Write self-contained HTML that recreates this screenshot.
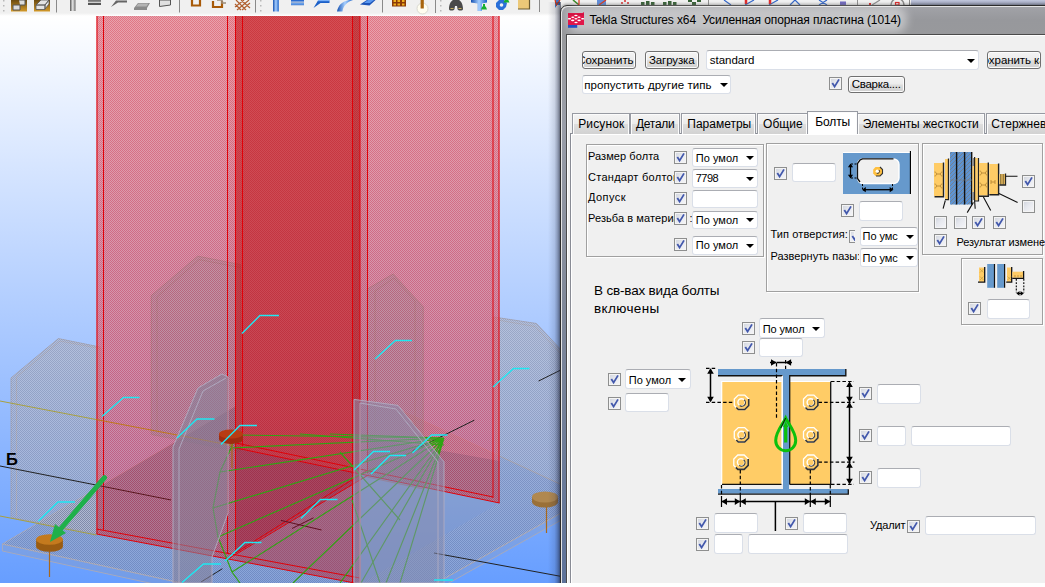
<!DOCTYPE html>
<html lang="ru"><head><meta charset="utf-8"><title>Tekla Structures</title>
<style>
html,body{margin:0;padding:0;background:#fff;}
#root{position:relative;width:1045px;height:587px;overflow:hidden;background:#fff;font-family:"Liberation Sans",sans-serif;font-size:12px;color:#000;}
#root svg.scene{position:absolute;left:0;top:0;}
#tb{position:absolute;left:0;top:0;width:1045px;height:16px;background:#f0f0f0;}
#tbr{position:absolute;left:911px;top:0;width:134px;height:6px;background:linear-gradient(#c0c6dc,#949ab2);}
#shadow{position:absolute;left:548px;top:2px;width:13px;height:581px;background:linear-gradient(90deg,rgba(40,50,80,0),rgba(40,50,80,.15) 50%,rgba(30,36,60,.6));}
#frame{position:absolute;left:560px;top:5px;width:500px;height:600px;box-sizing:border-box;border:1px solid #2c2c2c;border-radius:7px 0 0 0;background:linear-gradient(180deg,#a2a3a8 0,#97989c 14px,#98999c 28px,#9a9ea8 120px,#808898 300px,#5d7299 578px);box-shadow:inset 1px 1px 0 #e4e4e4,0 -1px 3px rgba(0,0,0,.38);}
#tglow{position:absolute;left:576px;top:15px;width:322px;height:9px;background:rgba(255,255,255,.42);box-shadow:0 0 9px 9px rgba(255,255,255,.42);border-radius:6px;}
#tdark{display:none;}
#title{position:absolute;left:589px;top:12px;white-space:nowrap;font-size:12px;line-height:15px;}
#client{position:absolute;left:566px;top:34px;width:490px;height:560px;box-sizing:border-box;border:1px solid #4a4a4a;background:#f0f0f0;box-shadow:inset 1px 1px 0 #fff;}
#bottom{position:absolute;left:0;top:583px;width:1045px;height:4px;background:#fff;}
.cb{position:absolute;width:13px;height:13px;box-sizing:border-box;border:1px solid #8e8f8f;background:linear-gradient(135deg,#cfd3dc 0,#e6e8ee 45%,#f6f6f8 100%);box-shadow:inset 0 0 0 1px #f4f4f4;}
.cb svg{position:absolute;left:0;top:0;}
.inp{position:absolute;box-sizing:border-box;background:#fff;border:1px solid #dadfe8;border-top-color:#abadb3;border-radius:3px;white-space:nowrap;overflow:hidden;}
.cmb .t{position:absolute;line-height:15px;white-space:nowrap;}
.cmb i{position:absolute;width:0;height:0;border-left:4px solid transparent;border-right:4px solid transparent;border-top:4.2px solid #000;}
.lb{position:absolute;white-space:nowrap;line-height:15px;font-size:12px;}
.btn{position:absolute;box-sizing:border-box;border:1px solid #707070;border-radius:3px;background:linear-gradient(#f4f4f4 0,#ececec 48%,#dedede 52%,#d0d0d0 100%);box-shadow:inset 0 0 0 1px #fcfcfc;overflow:hidden;white-space:nowrap;line-height:15px;}
.btn span{position:absolute;line-height:15px;white-space:nowrap;}
.grp{position:absolute;box-sizing:border-box;border:1px solid #a0a0a0;box-shadow:1px 1px 0 #fff,inset 1px 1px 0 #fff;}
.tab{position:absolute;box-sizing:border-box;border:1px solid #979aa2;border-bottom:none;background:linear-gradient(#f3f3f3 0,#ececec 50%,#dedede 50%,#d2d2d2 100%);box-shadow:inset 1px 1px 0 #fbfbfb,inset -1px 0 0 #fbfbfb;text-align:center;white-space:nowrap;overflow:hidden;line-height:17px;font-size:12.5px;}
.tab.sel{background:#fff;}
#pane{position:absolute;left:570px;top:133px;width:490px;height:470px;box-sizing:border-box;border:1px solid #898c95;background:#f0f0f0;box-shadow:inset 1px 1px 0 #fff;}

</style></head><body>
<div id="root">
<svg class="scene" width="560" height="583" viewBox="0 0 560 583">
<defs>
<linearGradient id="bg" x1="0" y1="15" x2="0" y2="583" gradientUnits="userSpaceOnUse"><stop offset="0" stop-color="#ffffff"/><stop offset="1" stop-color="#679eff"/></linearGradient>
<clipPath id="cnear"><polygon points="96.5,15 236,15 236,448 360,473 360,584 96.5,534"/></clipPath>
<pattern id="chk" width="2" height="2" patternUnits="userSpaceOnUse" shape-rendering="crispEdges"><rect width="1" height="1" fill="rgba(200,0,20,.17)"/><rect x="1" y="1" width="1" height="1" fill="rgba(200,0,20,.17)"/><rect x="1" width="1" height="1" fill="rgba(255,255,255,.17)"/><rect y="1" width="1" height="1" fill="rgba(255,255,255,.17)"/></pattern>
<pattern id="chkd" width="2" height="2" patternUnits="userSpaceOnUse" shape-rendering="crispEdges"><rect width="1" height="1" fill="rgba(170,0,10,.09)"/><rect x="1" y="1" width="1" height="1" fill="rgba(170,0,10,.09)"/><rect x="1" width="1" height="1" fill="rgba(255,255,255,.08)"/><rect y="1" width="1" height="1" fill="rgba(255,255,255,.08)"/></pattern>
<pattern id="chk2" width="2" height="2" patternUnits="userSpaceOnUse" shape-rendering="crispEdges"><rect width="1" height="1" fill="rgba(90,90,110,.16)"/><rect x="1" y="1" width="1" height="1" fill="rgba(90,90,110,.16)"/><rect x="1" width="1" height="1" fill="rgba(255,255,255,.14)"/><rect y="1" width="1" height="1" fill="rgba(255,255,255,.14)"/></pattern>
</defs>
<rect x="0" y="0" width="560" height="583" fill="url(#bg)"/>
<!-- base plate -->
<g fill="rgba(138,138,152,.42)" stroke="rgba(170,170,185,.9)" stroke-width="1">
<polygon points="2.4,544 236,406.3 236,448 360,473 360,400 400,410 589,497.4 365,623"/>
<polygon points="2.4,544 365,623 589,497.4 589,504.5 365,630 2.4,551" fill="rgba(150,150,160,.25)"/>
</g>
<!-- outer stiffeners behind column -->
<g fill="rgba(165,165,178,.52)" stroke="rgba(160,160,175,.9)" stroke-width="1">
<polygon points="11,378 58.4,338.6 100,347 100,534 11,517.5"/>
<polygon points="493.5,317 536.5,323.5 575,365 575,491 496,454.5"/>
</g>
<g fill="none" stroke="rgba(170,170,185,.9)" stroke-width="1">
<polyline points="16.5,517 16.5,377 60,341 102,349"/>
<polyline points="498,320 535,326.5 575,369"/>
</g>
<g fill="url(#chk2)"><polygon points="11,378 58.4,338.6 100,347 100,534 11,517.5"/><polygon points="493.5,317 536.5,323.5 575,365 575,491 496,454.5"/><polygon points="2.4,544 96.5,488 96.5,534 360,584 499.5,503 499.5,456 589,497.4 365,623"/></g>
<!-- far flange (part outside near flange) -->
<polygon points="360,15 499.5,15 499.5,503 360,473" fill="rgba(215,85,105,.66)"/>

<!-- near flange -->
<polygon points="96.5,15 360,15 360,584 96.5,534" fill="rgba(215,85,105,.66)"/>
<g fill="rgba(125,120,130,.30)" stroke="rgba(165,115,125,.85)" stroke-width="1">
<polygon points="151.3,295.6 197.7,256.2 240.6,264.6 240.6,452 151.3,434.4"/>
</g>
<polyline points="157,433 157,297 199,259.5 240,267.5" fill="none" stroke="rgba(165,115,125,.85)"/>
<polygon points="367.3,289 393.2,274 423.2,306.8 423.2,489 367.3,477" fill="rgba(125,120,130,.30)" stroke="rgba(165,115,125,.85)"/>
<polyline points="375,477 375,291 394,278 415,301 415,486" fill="none" stroke="rgba(165,115,125,.85)"/>
<polygon points="367.7,437.500 499.500,461 499.500,503 367.700,475.400" fill="rgba(90,60,100,.28)"/>
<!-- overlap darkening -->
<polygon points="236,15 360,15 360,473 236,448" fill="rgba(192,0,0,.55)"/>
<!-- web -->
<polygon points="228,15 236,15 236,553 228,559" fill="rgba(192,0,0,.04)"/>
<polygon points="360,15 367.7,15 367.7,475.4 360,480" fill="rgba(150,40,60,.12)"/>
<polygon points="352.5,15 360,15 360,473 352.5,471" fill="rgba(120,0,0,.14)"/>
<polygon points="236,448 360,473 360,480 236,553" fill="rgba(192,0,20,.50)"/>
<polygon points="2.4,544 280,380 400,410 589,497.4 365,623" fill="rgba(90,60,100,.30)" clip-path="url(#cnear)"/>
<polygon points="96.5,16 236,16 236,560.500 96.5,534" fill="url(#chk)"/><polygon points="360,16 499.5,16 499.5,503 360,473" fill="url(#chk)"/><polygon points="236,16 360,16 360,584 236,560.500" fill="url(#chkd)"/>
<!-- red edges -->
<g stroke="#e00008" stroke-width="1" fill="none">
<path d="M97 15V534M103.5 15V530M227.5 15V554M235.5 15V553M242.5 15V446M352.5 15V583M360 15V583M367.5 15V473M493 15V498M499 15V503"/>
<path d="M96.5 534L360 584M96.5 529L360 578M236 448L499.5 503M236 443L493 497M228 559L367.7 475.4M235.5 553L367.7 470"/>
</g>
<!-- grid lines -->
<g fill="none" stroke-width="1">
<path d="M0 401L96 419.5M0 516L96.5 535" stroke="#a8a040"/>
<path d="M96 419.5L232 445.5" stroke="#c07818"/>
<path d="M0 466L96 485" stroke="#222"/>
<path d="M96 485L171 500" stroke="#5a1820"/>
<path d="M281 520.4L321.5 530M292 528.5L313.5 517.8" stroke="#601020"/>
<path d="M434 553L560 576.2M201 582L222.4 568.7M412.6 450.8L474.3 420.2M538.6 381L560 370.4" stroke="#222"/>
</g>
<!-- green fan -->
<g fill="none" stroke="#2fa512" stroke-width="1.15">
<path d="M444 438L236 435M444 438L231 448M444 438L220 472M444 438L213 508M444 438L218 537M444 438L232 572M444 438L293 583M444 438L340 583M444 438L361 583M444 438L386 583M444 438L400 583M444 438L330 434"/>
<path d="M236 435L231 448L220 472L213 508L218 537L232 572L240 583"/>
<path d="M340 452L400 520M352 500L380 583M300 434L444 445"/>
</g>
<!-- front stiffeners -->
<g fill="rgba(135,130,155,.60)" stroke="rgba(176,172,194,.9)" stroke-width="1">
<polygon points="198,388 222,374 228,377 228,513 212,557 212,583 173,583 173,447"/>
<polygon points="354,399.4 398,405.4 444,461.8 444,583 354,583" fill="rgba(135,140,175,.55)"/>
</g>
<g fill="none" stroke="rgba(176,172,194,.9)">
<polyline points="179,583 179,449 203,391 226,378"/>
<polyline points="360,583 360,403 396,409 438,462 438,583"/>
</g>
<!-- anchors -->
<g>
<path d="M49.500 548V577M546.500 503V533M232 440V468" stroke="#a8681c" stroke-width="1.200"/>
<path d="M36.100 539.500v7a13.400 5.200 0 0 0 26.800 0v-7z" fill="#9a5c12"/><ellipse cx="49.500" cy="539.500" rx="13.400" ry="5.200" fill="#c47a1e"/>
<path d="M532 497v5a13 5.500 0 0 0 26 0v-5z" fill="#9a7038"/><ellipse cx="545" cy="497" rx="13" ry="5.500" fill="#b08850"/>
<path d="M219 434v5a12 5 0 0 0 24 0v-5z" fill="#a02c10"/><ellipse cx="231" cy="434" rx="12" ry="4.500" fill="#b83c14"/>
</g>
<!-- green arrow -->
<path d="M104.5 477.600L58 532" stroke="#1fb04a" stroke-width="5" stroke-linecap="round"/>
<polygon points="50,542 55,524 66,533" fill="#1fb04a"/>
<!-- cyan marks -->
<g fill="none" stroke="#1ee8f2" stroke-width="1.4" transform="translate(0,.5)">
<path d="M242 333L260 315H279M375 358.600L395.500 340H412M102 416L123.500 397H139.500M493 386.500L513.500 368H529.500M177 437.500L197 418.500H214.500M221 444L240 425H257M354 469.500L373.500 451H390M371 473.500L390 455H406M412.500 452.500L431.500 434.500H447.500M38.500 520.500L58 501.500H75M301 518L320.500 499H337.500M225 560.500L245 542H261.500M182 582L203.500 563.500H221M434 579.500H453"/>
</g>
<text x="6" y="464.800" font-family="Liberation Sans, sans-serif" font-weight="bold" font-size="16.500" fill="#000">Б</text>
</svg>

<div id="tb"></div><div id="tbr"></div>
<svg id="tbi" width="1045" height="16" viewBox="0 0 1045 16" style="position:absolute;left:0;top:0">
<defs>
<linearGradient id="gd" x1="0" y1="0" x2="0" y2="1"><stop offset="0" stop-color="#6a4a10"/><stop offset="1" stop-color="#d49a2a"/></linearGradient>
<linearGradient id="gy" x1="0" y1="0" x2="1" y2="0"><stop offset="0" stop-color="#555"/><stop offset=".5" stop-color="#e8e8e8"/><stop offset="1" stop-color="#666"/></linearGradient>
<linearGradient id="gb" x1="0" y1="0" x2="1" y2="0"><stop offset="0" stop-color="#1450b0"/><stop offset=".5" stop-color="#a8d0ff"/><stop offset="1" stop-color="#1860c8"/></linearGradient>
<linearGradient id="gbv" x1="0" y1="0" x2="0" y2="1"><stop offset="0" stop-color="#1450b0"/><stop offset=".5" stop-color="#8cc0ff"/><stop offset="1" stop-color="#1454b8"/></linearGradient>
<linearGradient id="fade" x1="0" y1="0" x2="0" y2="1"><stop offset="0" stop-color="#f0f0f0"/><stop offset="1" stop-color="#ffffff"/></linearGradient>
</defs>
<rect x="0" y="13" width="560" height="3" fill="url(#fade)"/>
<g fill="#b8b8b8"><rect x="3" y="0" width="1.500" height="1.500"/><rect x="3" y="5" width="1.500" height="1.500"/><rect x="3" y="10" width="1.500" height="1.500"/><rect x="260" y="0" width="1.500" height="1.500"/><rect x="260" y="5" width="1.500" height="1.500"/><rect x="260" y="10" width="1.500" height="1.500"/><rect x="440" y="0" width="1.500" height="1.500"/><rect x="440" y="5" width="1.500" height="1.500"/><rect x="440" y="10" width="1.500" height="1.500"/></g>
<g stroke="#8a8a8a" stroke-width="1"><path d="M56.500 0V12.500M179.500 0V12.500M255.500 0V12.500M382.500 0V12.500M435.500 0V13M539.500 0V12"/></g>
<rect x="11" y="0" width="16" height="11.500" fill="url(#gd)"/><path d="M13 5h7v5h-7zM19 0h6v5h-5" fill="#dcdcdc" stroke="#555" stroke-width="1"/>
<rect x="34" y="0" width="16" height="11.500" fill="url(#gd)"/><path d="M36 5l5-5h8l-4 5zM36 5h9v4.500h-9zM45 5l4-5v4l-4 5z" fill="#e4e4e4" stroke="#555" stroke-width=".8"/>
<rect x="70" y="0" width="5.500" height="11" fill="url(#gy)"/>
<rect x="88" y="0" width="13" height="1.800" fill="#777"/><rect x="88" y="2.800" width="13" height="2.200" fill="#555"/>
<path d="M111 7l5-6.500h11v2h-9z" fill="#666"/><path d="M116 0h11v1h-11z" fill="#aaa"/>
<path d="M134 8l4-5h12l-3 5zM134 8h13v2h-13z" fill="#8a8a8a"/><path d="M136 6.500l2.500-3h10l-2 3z" fill="#b4b4b4"/>
<path d="M159.500 0v6.500l11-1.500v-5z" fill="#e0e0e0" stroke="#555" stroke-width="1"/>
<path d="M192 0v5.500h8v-5.500" fill="none" stroke="#a85a08" stroke-width="2.200"/>
<path d="M213 1v6h9v-6" fill="none" stroke="#a85a08" stroke-width="2.200"/><path d="M217 0h5v3h4" fill="none" stroke="#9a8a78" stroke-width="1.600"/>
<path d="M236 0l10 10M241 0l9 8M235 4l6 6M249 0l-12 10M244 0l-9 7M250 3l-8 7" stroke="#b06030" stroke-width="1.200" fill="none"/>
<rect x="273" y="0" width="5.800" height="11.500" fill="url(#gb)"/>
<rect x="291" y="0" width="13" height="1.600" fill="#2a6cd0"/><rect x="291" y="2.600" width="13" height="2.600" fill="url(#gbv)"/>
<path d="M313.500 8l4.500-7.500h11.500v2.500h-9z" fill="#1c60c8"/><path d="M318 0h11.500v1.200h-11.500z" fill="#78b0f8"/>
<path d="M337 11.500c1-6 5-10 12-11.500h4c-6 2-10 6-10.500 11.500z" fill="url(#gb)"/>
<path d="M360 4.500l7-4.500h8.500l-6 5.500z" fill="#1c54b8"/><path d="M364 3l4-3h6l-4 3z" fill="#5a98f0"/>
<g fill="#8a3a08"><rect x="392" y="0" width="14" height="6.500"/></g><g fill="#f0b020"><rect x="393.500" y="0" width="2.500" height="2"/><rect x="397.500" y="0" width="2.500" height="2"/><rect x="402" y="0" width="2.500" height="2"/><rect x="393.500" y="3.500" width="2.500" height="2"/><rect x="397.500" y="3.500" width="2.500" height="2"/><rect x="402" y="3.500" width="2.500" height="2"/></g>
<circle cx="422.500" cy="8.500" r="5.500" fill="#fffdf0" stroke="#d8d8d0" stroke-width="1"/><rect x="420.600" y="0" width="3.200" height="8.500" fill="#a8640c"/>
<path d="M449 9c0-5 2-8 4-9h6c2 1 4 4 4 9c0 2-5 2-5.500 0l-.5-3h-2l-.5 3c-.5 2-5.500 2-5.500 0z" fill="#4a4a4a"/><path d="M450.500 8.500h3M458.500 8.500h3" stroke="#c8b060" stroke-width="1.200"/>
<path d="M471 0h16v2.500l-5 1v7.500h-4.500v-7.500l-6.500-1z" fill="url(#gb)"/><path d="M481 9.500h6l-1.200-3h-.8v-2.500h-2v2.500h-.8z" fill="#18b030"/>
<path d="M496 3l3-3h5l3 3-1 4-3 3h-4l-3-3z" fill="#2a70d8"/><circle cx="501.500" cy="5" r="1.800" fill="#f0f0f0"/><path d="M503.500 2.500h6l-1.200-2.500h-3.600z" fill="#18b030"/>
<rect x="518" y="0" width="11.500" height="9" fill="#ecc878"/><path d="M529.500 0v9h-11.500" fill="none" stroke="#6a5a30" stroke-width="1.200"/>
<path d="M555 0h5v5h-3l-2 3z" fill="#3a78d0"/><path d="M555 0l1.500 5l3.500-5" fill="none" stroke="#e83808" stroke-width="1.200"/>
<!-- strip above dialog -->
<g>
<path d="M573 0l6 5V0" fill="none" stroke="#d83010" stroke-width="1.200"/><path d="M573 0l5 4" stroke="#20a030" stroke-width="1.200"/>
<path d="M597 0h9v5h-9z" fill="#5a88d8"/><path d="M599 5l7-5" stroke="#e03010" stroke-width="1.200"/>
<path d="M621 3h2M627 3h2M624 1h2" stroke="#d82020" stroke-width="1.500"/>
<g fill="#2c5a2c"><rect x="641" y="2" width="3.500" height="3"/><rect x="646" y="1" width="3.500" height="4"/><rect x="651" y="2" width="3.500" height="3"/><rect x="663" y="2" width="3.500" height="3"/><rect x="668" y="1" width="3.500" height="4"/><rect x="673" y="2" width="3.500" height="3"/><rect x="688" y="0" width="4" height="2"/><rect x="692" y="2" width="4" height="3"/><rect x="697" y="0" width="4" height="2"/></g>
<path d="M708.500 0V5M857.500 0V5M909.500 0V5" stroke="#8a8a8a"/>
<path d="M724 0l7 5M745 5l9-5M769 5l9-5M790 5l5-5l5 5M819 0l8 5M827 0l-8 5" stroke="#2a60c8" stroke-width="1.200" fill="none"/>
<path d="M746 0v4M770 0v4" stroke="#e02020" stroke-width="2.500"/>
<rect x="840" y="1.500" width="6" height="3.500" fill="#6a60c0"/>
<path d="M869 3h2v2h-2z" fill="#e02020"/><path d="M872 5l8-5" stroke="#888" stroke-width="1.200"/>
<path d="M891 5a6.500 6.500 0 0 1 13 0" fill="none" stroke="#8a8a8a" stroke-width="1.500"/><rect x="895.500" y="2.500" width="3.500" height="2.500" fill="none" stroke="#e02020" stroke-width="1.200"/>
</g>
</svg>

<div id="win">
<div id="shadow"></div><div id="frame"></div><div id="tglow"></div><div id="tdark"></div>
<svg width="20" height="20" viewBox="566 10 20 20" style="position:absolute;left:566px;top:10px"><rect x="568" y="24" width="9.200" height="3.800" fill="#2452c4"/><path d="M568 13h14.500l1.500-1v13h-16z" fill="#e0184a"/><path d="M568 14.500h16" stroke="#c01038" stroke-width="1.500" opacity=".5"/><g fill="#fff"><ellipse cx="575.900" cy="15.600" rx="1.700" ry=".75"/><ellipse cx="572.800" cy="17.200" rx="1.600" ry=".75"/><ellipse cx="579" cy="17.200" rx="1.600" ry=".75"/><rect x="568" y="18.100" width="3" height="1.300" rx=".6"/><ellipse cx="575.900" cy="18.800" rx="1.600" ry=".75"/><rect x="581.200" y="18.100" width="2.800" height="1.300" rx=".6"/><ellipse cx="572.700" cy="20.400" rx="1.700" ry=".8"/><ellipse cx="579.100" cy="20.400" rx="1.700" ry=".8"/><ellipse cx="576" cy="22.500" rx="1.700" ry=".8"/></g></svg>

<span class="lb " style="left:589.5px;top:13.00px;font-size:12px;letter-spacing:-0.113px;">Tekla Structures x64&nbsp; Усиленная опорная пластина (1014)</span>
<div id="client"></div>
<span class="btn" style="left:582px;top:51px;width:54px;height:18px"><span style="left:-5.82px;top:1.00px;font-size:11.5px;letter-spacing:-0.093px">Сохранить</span></span>
<span class="btn" style="left:645px;top:51px;width:54px;height:18px"><span style="left:3px;top:1.00px;font-size:11.5px;letter-spacing:-0.127px;">Загрузка</span></span>
<span class="inp cmb" style="left:706px;top:50px;width:273px;height:19.5px"><span class="t" style="left:2.8px;top:2.00px;font-size:11.5px;letter-spacing:-0.033px;">standard</span><i style="left:260.3px;top:7.8px"></i></span>
<span class="btn" style="left:987px;top:51px;width:54px;height:18px"><span style="left:-13.57px;top:1.00px;font-size:11.5px;letter-spacing:-0.068px">Сохранить как</span></span>
<span class="inp cmb" style="left:582px;top:74.5px;width:149px;height:19px"><span class="t" style="left:1.2px;top:2.50px;font-size:11.5px;letter-spacing:0.086px;">пропустить другие типь</span><i style="left:137.0px;top:7.5px"></i></span>
<span class="cb" style="left:829px;top:77px;"><svg width="11" height="11" viewBox="0 0 11 11"><path d="M2.3 5L4.6 8.6L9 1.4" fill="none" stroke="#4258ac" stroke-width="1.8"/></svg></span>
<span class="btn" style="left:848px;top:75.5px;width:57px;height:17.5px"><span style="left:2.7px;top:0.50px;font-size:11.5px;letter-spacing:-0.255px;">Сварка....</span></span>
<div id="pane"></div>
<span class="tab" style="left:572px;top:113px;width:58px;height:21px"></span>
<span class="lb " style="left:578.2px;top:117.00px;font-size:12px;letter-spacing:0.133px;">Рисунок</span>
<span class="tab" style="left:630px;top:113px;width:50px;height:21px"></span>
<span class="lb " style="left:635.9px;top:117.00px;font-size:12px;letter-spacing:-0.243px;">Детали</span>
<span class="tab" style="left:681px;top:113px;width:75px;height:21px"></span>
<span class="lb " style="left:687.3px;top:117.00px;font-size:12px;letter-spacing:-0.008px;">Параметры</span>
<span class="tab" style="left:757px;top:113px;width:51px;height:21px"></span>
<span class="lb " style="left:763.1px;top:117.00px;font-size:12px;letter-spacing:0.006px;">Общие</span>
<span class="tab" style="left:857px;top:113px;width:127.5px;height:21px"></span>
<span class="lb " style="left:862.7px;top:117.00px;font-size:12px;letter-spacing:-0.076px;">Элементы жесткости</span>
<span class="tab" style="left:985.5px;top:113px;width:74.5px;height:21px"></span>
<span class="lb " style="left:991.2px;top:117.00px;font-size:12px;">Стержневые</span>
<span class="tab sel" style="left:807px;top:111px;width:51px;height:23px"></span>
<span class="lb " style="left:815.3px;top:115.00px;font-size:12px;letter-spacing:-0.144px;">Болты</span>
<span class="grp" style="left:586px;top:144px;width:178px;height:113px"></span>
<span class="lb " style="left:588px;top:149.00px;font-size:11px;letter-spacing:0.067px;">Размер болта</span>
<span class="lb " style="left:588px;top:170.00px;font-size:11px;width:86.3px;overflow:hidden;letter-spacing:0.272px;">Стандарт болтов</span>
<span class="lb " style="left:588px;top:190.00px;font-size:11px;letter-spacing:0.426px;">Допуск</span>
<span class="lb " style="left:689.6px;top:211.00px;font-size:11px;">:</span>
<span class="lb " style="left:588px;top:211.00px;font-size:11px;width:86px;overflow:hidden;letter-spacing:0.083px;">Резьба в материале:</span>
<span class="cb" style="left:674px;top:151px;"><svg width="11" height="11" viewBox="0 0 11 11"><path d="M2.3 5L4.6 8.6L9 1.4" fill="none" stroke="#4258ac" stroke-width="1.8"/></svg></span>
<span class="cb" style="left:674px;top:171px;"><svg width="11" height="11" viewBox="0 0 11 11"><path d="M2.3 5L4.6 8.6L9 1.4" fill="none" stroke="#4258ac" stroke-width="1.8"/></svg></span>
<span class="cb" style="left:674px;top:192px;"><svg width="11" height="11" viewBox="0 0 11 11"><path d="M2.3 5L4.6 8.6L9 1.4" fill="none" stroke="#4258ac" stroke-width="1.8"/></svg></span>
<span class="cb" style="left:674px;top:212px;"><svg width="11" height="11" viewBox="0 0 11 11"><path d="M2.3 5L4.6 8.6L9 1.4" fill="none" stroke="#4258ac" stroke-width="1.8"/></svg></span>
<span class="cb" style="left:674px;top:238px;"><svg width="11" height="11" viewBox="0 0 11 11"><path d="M2.3 5L4.6 8.6L9 1.4" fill="none" stroke="#4258ac" stroke-width="1.8"/></svg></span>
<span class="inp cmb" style="left:692px;top:147.5px;width:66px;height:19px"><span class="t" style="left:2.8px;top:2.50px;font-size:11px;letter-spacing:0.025px;">По умол</span><i style="left:52.7px;top:7.6px"></i></span>
<span class="inp cmb" style="left:692px;top:169px;width:66px;height:18.5px"><span class="t" style="left:2.8px;top:1.00px;font-size:11px;letter-spacing:-0.571px;">7798</span><i style="left:52.7px;top:6.7px"></i></span>
<span class="inp" style="left:692px;top:189.5px;width:66px;height:18px"></span>
<span class="inp cmb" style="left:692px;top:210.5px;width:66px;height:18.5px"><span class="t" style="left:2.8px;top:1.50px;font-size:11px;letter-spacing:0.025px;">По умол</span><i style="left:52.7px;top:6.5px"></i></span>
<span class="inp cmb" style="left:692px;top:235.5px;width:66px;height:19px"><span class="t" style="left:2.8px;top:1.50px;font-size:11px;letter-spacing:0.025px;">По умол</span><i style="left:52.7px;top:7.2px"></i></span>
<span class="grp" style="left:766px;top:143px;width:153px;height:149px"></span>
<span class="cb" style="left:774px;top:167px;"><svg width="11" height="11" viewBox="0 0 11 11"><path d="M2.3 5L4.6 8.6L9 1.4" fill="none" stroke="#4258ac" stroke-width="1.8"/></svg></span>
<span class="inp" style="left:792px;top:162.5px;width:44px;height:19.5px"></span>
<span class="cb" style="left:841px;top:204px;"><svg width="11" height="11" viewBox="0 0 11 11"><path d="M2.3 5L4.6 8.6L9 1.4" fill="none" stroke="#4258ac" stroke-width="1.8"/></svg></span>
<span class="inp" style="left:859px;top:201px;width:44px;height:19.5px"></span>
<span class="lb " style="left:770.4px;top:227.00px;font-size:11px;letter-spacing:0.117px;">Тип отверстия:</span>
<span class="cb" style="left:849px;top:230px;width:5.5px;border-right:none;overflow:hidden"><svg width="11" height="11" viewBox="0 0 11 11"><path d="M2.3 5L4.6 8.6L9 1.4" fill="none" stroke="#4258ac" stroke-width="1.8"/></svg></span>
<span class="inp cmb" style="left:859.5px;top:226.5px;width:58px;height:19.5px"><span class="t" style="left:2.1px;top:1.50px;font-size:11px;letter-spacing:-0.072px;">По умс</span><i style="left:45.5px;top:7.3px"></i></span>
<span class="lb " style="left:770.4px;top:249.00px;font-size:11px;letter-spacing:0.042px;width:89px;overflow:hidden">Развернуть пазы:</span>
<span class="inp cmb" style="left:859.5px;top:248px;width:58px;height:18.5px"><span class="t" style="left:2.1px;top:2.00px;font-size:11px;letter-spacing:-0.072px;">По умс</span><i style="left:45.5px;top:6.9px"></i></span>
<span class="grp" style="left:922px;top:143px;width:121px;height:112px"></span>
<span class="cb" style="left:1022px;top:175px;"><svg width="11" height="11" viewBox="0 0 11 11"><path d="M2.3 5L4.6 8.6L9 1.4" fill="none" stroke="#4258ac" stroke-width="1.8"/></svg></span>
<span class="cb" style="left:1022px;top:200px;"></span>
<span class="cb" style="left:934px;top:216px;"></span>
<span class="cb" style="left:954px;top:216px;"></span>
<span class="cb" style="left:972px;top:216px;"><svg width="11" height="11" viewBox="0 0 11 11"><path d="M2.3 5L4.6 8.6L9 1.4" fill="none" stroke="#4258ac" stroke-width="1.8"/></svg></span>
<span class="cb" style="left:993px;top:216px;"><svg width="11" height="11" viewBox="0 0 11 11"><path d="M2.3 5L4.6 8.6L9 1.4" fill="none" stroke="#4258ac" stroke-width="1.8"/></svg></span>
<span class="cb" style="left:934px;top:234px;"><svg width="11" height="11" viewBox="0 0 11 11"><path d="M2.3 5L4.6 8.6L9 1.4" fill="none" stroke="#4258ac" stroke-width="1.8"/></svg></span>
<span class="lb " style="left:956.5px;top:235.00px;font-size:11px;letter-spacing:-0.104px;">Результат изменен</span>
<span class="grp" style="left:961px;top:258px;width:82px;height:67px"></span>
<span class="cb" style="left:968px;top:302px;"><svg width="11" height="11" viewBox="0 0 11 11"><path d="M2.3 5L4.6 8.6L9 1.4" fill="none" stroke="#4258ac" stroke-width="1.8"/></svg></span>
<span class="inp" style="left:986.5px;top:298.5px;width:43.5px;height:20px"></span>
<span class="lb " style="left:594px;top:283.00px;font-size:13.5px;letter-spacing:-0.177px;">В св-вах вида болты</span>
<span class="lb " style="left:594px;top:301.00px;font-size:13.5px;letter-spacing:0.370px;">включены</span>
<span class="cb" style="left:742px;top:322px;"><svg width="11" height="11" viewBox="0 0 11 11"><path d="M2.3 5L4.6 8.6L9 1.4" fill="none" stroke="#4258ac" stroke-width="1.8"/></svg></span>
<span class="inp cmb" style="left:759px;top:318px;width:66px;height:19.5px"><span class="t" style="left:2.7px;top:3.00px;font-size:11px;letter-spacing:-0.075px;">По умол</span><i style="left:52.2px;top:8.0px"></i></span>
<span class="cb" style="left:742px;top:341px;"><svg width="11" height="11" viewBox="0 0 11 11"><path d="M2.3 5L4.6 8.6L9 1.4" fill="none" stroke="#4258ac" stroke-width="1.8"/></svg></span>
<span class="inp" style="left:759px;top:337.5px;width:44px;height:19px"></span>
<span class="cb" style="left:608px;top:373px;"><svg width="11" height="11" viewBox="0 0 11 11"><path d="M2.3 5L4.6 8.6L9 1.4" fill="none" stroke="#4258ac" stroke-width="1.8"/></svg></span>
<span class="inp cmb" style="left:625px;top:369px;width:65.5px;height:19.5px"><span class="t" style="left:2.8px;top:3.00px;font-size:11px;letter-spacing:-0.004px;">По умол</span><i style="left:52.2px;top:8.4px"></i></span>
<span class="cb" style="left:608px;top:397px;"><svg width="11" height="11" viewBox="0 0 11 11"><path d="M2.3 5L4.6 8.6L9 1.4" fill="none" stroke="#4258ac" stroke-width="1.8"/></svg></span>
<span class="inp" style="left:625px;top:393px;width:44px;height:19px"></span>
<span class="cb" style="left:859px;top:387px;"><svg width="11" height="11" viewBox="0 0 11 11"><path d="M2.3 5L4.6 8.6L9 1.4" fill="none" stroke="#4258ac" stroke-width="1.8"/></svg></span>
<span class="inp" style="left:877px;top:384px;width:44px;height:19.5px"></span>
<span class="cb" style="left:859px;top:429px;"><svg width="11" height="11" viewBox="0 0 11 11"><path d="M2.3 5L4.6 8.6L9 1.4" fill="none" stroke="#4258ac" stroke-width="1.8"/></svg></span>
<span class="inp" style="left:877px;top:426px;width:29px;height:19.5px"></span>
<span class="inp" style="left:911px;top:426px;width:100px;height:19.5px"></span>
<span class="cb" style="left:859px;top:471px;"><svg width="11" height="11" viewBox="0 0 11 11"><path d="M2.3 5L4.6 8.6L9 1.4" fill="none" stroke="#4258ac" stroke-width="1.8"/></svg></span>
<span class="inp" style="left:877px;top:468px;width:44px;height:19.5px"></span>
<span class="cb" style="left:696px;top:517px;"><svg width="11" height="11" viewBox="0 0 11 11"><path d="M2.3 5L4.6 8.6L9 1.4" fill="none" stroke="#4258ac" stroke-width="1.8"/></svg></span>
<span class="inp" style="left:714px;top:512.5px;width:44px;height:20px"></span>
<span class="cb" style="left:785px;top:517px;"><svg width="11" height="11" viewBox="0 0 11 11"><path d="M2.3 5L4.6 8.6L9 1.4" fill="none" stroke="#4258ac" stroke-width="1.8"/></svg></span>
<span class="inp" style="left:803px;top:512.5px;width:44px;height:20px"></span>
<span class="cb" style="left:696px;top:538px;"><svg width="11" height="11" viewBox="0 0 11 11"><path d="M2.3 5L4.6 8.6L9 1.4" fill="none" stroke="#4258ac" stroke-width="1.8"/></svg></span>
<span class="inp" style="left:714px;top:534px;width:28.5px;height:19.5px"></span>
<span class="inp" style="left:748px;top:534px;width:100px;height:19.5px"></span>
<span class="lb " style="left:870px;top:518.00px;font-size:11px;letter-spacing:-0.128px;">Удалит</span>
<span class="cb" style="left:907px;top:520px;"><svg width="11" height="11" viewBox="0 0 11 11"><path d="M2.3 5L4.6 8.6L9 1.4" fill="none" stroke="#4258ac" stroke-width="1.8"/></svg></span>
<span class="inp" style="left:925px;top:515.5px;width:111px;height:19.5px"></span>
<svg id="pics" width="1045" height="587" viewBox="0 0 1045 587" style="position:absolute;left:0;top:0;pointer-events:none">
<defs>
<pattern id="hatch" width="4" height="4" patternUnits="userSpaceOnUse"><path d="M-1 5l6-6M-1 1l2-2M3 5l2-2" stroke="#7a7a7a" stroke-width=".7"/></pattern>
</defs>
<!-- slotted hole picture -->
<rect x="843" y="152" width="67.500" height="42" fill="#6699cc"/>
<path d="M843 152.500h67" stroke="#fff" stroke-width="1"/>
<path d="M910.500 151v43" stroke="#000" stroke-width="1.300"/><path d="M911.700 151v43" stroke="#fff" stroke-width="1"/>
<rect x="857.500" y="159" width="41.500" height="24.500" rx="5.500" fill="#f0f0f0" stroke="#fff" stroke-width="1.400"/>
<path d="M860 182l-2.500-3.500v-15l2.500-3.500l2.500-1.200h31" fill="none" stroke="#111" stroke-width="1.300"/>
<path d="M875.500 167h4.500l2.500 2.500v4l-2.500 2.500h-4.500l-2.300-2.500v-4z" fill="#ffc040"/><path d="M880 167l2.500 2.500v4l-2.500 2.500h-4" fill="none" stroke="#333" stroke-width="1.100"/><circle cx="877.300" cy="171.300" r="1.700" fill="#fff"/><path d="M879 170a2 2 0 0 1-2.300 3.200" stroke="#333" stroke-width=".9" fill="none"/>
<path d="M850.500 165v12" stroke="#000" stroke-width="1.300"/><path d="M850.500 163.500l2.600 3.800h-5.200zM850.500 178.500l2.600-3.800h-5.200z" fill="#000"/>
<path d="M851 164h6M851 178h6M862.500 184v5M892.500 184v5" stroke="#000" stroke-width="1" stroke-dasharray="2 1.500"/>
<path d="M863 189.700h29" stroke="#000" stroke-width="1.300"/><path d="M862 189.700l3.800-2.600v5.200zM893.500 189.700l-3.800-2.600v5.200z" fill="#000"/>
<!-- bolt assembly picture -->
<g>
<rect x="934" y="163" width="9.500" height="33" fill="#ffcc66"/><path d="M943.500 162.500v34.200h-9" fill="none" stroke="#222" stroke-width="1.400"/>
<path d="M934.500 172c1.500 0 2 1 2 2s-.5 2-2 2M942.500 172c-1.500 0-2 1-2 2s.5 2 2 2M936.500 174h4M934.500 184c1.500 0 2 1 2 2s-.5 2-2 2M942.500 184c-1.500 0-2 1-2 2s.5 2 2 2M936.500 186h4" fill="none" stroke="#b08030" stroke-width=".8"/>
<rect x="945" y="159" width="3" height="40" fill="#ffcc66"/><path d="M948.500 158.500v41.200h-3.500" fill="none" stroke="#222" stroke-width="1.300"/>
<rect x="950" y="152" width="22" height="52.500" fill="#5e93d1"/><rect x="950" y="152" width="22" height="52.500" fill="url(#hatch)"/>
<path d="M956.600 152v52.500M964.600 152v52.500M971.700 152v52.500" stroke="#111" stroke-width="1.400"/>
<path d="M950 180h22" stroke="#7a7a7a" stroke-width=".6"/>
<rect x="972.500" y="158" width="2" height="42" fill="#8a8a8a"/><rect x="972.500" y="166" width="2" height="26" fill="#ffcc66"/>
<rect x="974.800" y="158" width="3" height="42.500" fill="#ffcc66"/><path d="M974.600 157v44M978.500 158v43h-4" fill="none" stroke="#222" stroke-width="1.200"/>
<rect x="979" y="163" width="9" height="32.500" fill="#ffcc66"/><path d="M988.300 162.500v33.700h-9.300" fill="none" stroke="#222" stroke-width="1.400"/>
<path d="M979.500 171c1.500 0 2 1 2 2s-.5 2-2 2M987.500 171c-1.500 0-2 1-2 2s.5 2 2 2M981.500 173h4M979.500 183c1.500 0 2 1 2 2s-.5 2-2 2M987.500 183c-1.500 0-2 1-2 2s.5 2 2 2M981.500 185h4" fill="none" stroke="#b08030" stroke-width=".8"/>
<rect x="989.300" y="164" width="9" height="30" fill="#ffcc66"/><path d="M998.600 163.500v31.300h-9.300" fill="none" stroke="#222" stroke-width="1.400"/><path d="M991 180v4M995 180v4M991 182h4" stroke="#b08030" stroke-width=".8" fill="none"/>
<rect x="999.300" y="174" width="6" height="10.500" fill="#ffcc66"/><path d="M1000.500 174v10.500M1002 174v10.500M1003.500 174v10.500" stroke="#6a5a30" stroke-width=".7"/><path d="M1005.500 173.500v11.500h-6.200" fill="none" stroke="#222" stroke-width="1.300"/>
<path d="M1005.500 176.300h12M999 193.600l18.600 8.800M983.400 197l7.300 13.400M974.600 201l.6 7.700M973.400 202.400l-6.200 10.200M945.300 200.500l-2.200 8.200" stroke="#111" stroke-width="1.100" fill="none"/>
</g>
<!-- small picture -->
<g>
<rect x="979" y="267.500" width="5.400" height="14.300" fill="#ffcc66"/><path d="M984.700 267v15.200h-6.700" fill="none" stroke="#111" stroke-width="1.300"/><path d="M980 269l3.500 3.500M983.500 269l-3.500 3.500M980 276.500l3.500 3.500M983.500 276.500l-3.500 3.500" stroke="#c8a040" stroke-width=".7"/>
<rect x="987.200" y="264" width="6.800" height="23.800" fill="#6699cc"/><path d="M994.500 264v23.800" stroke="#111" stroke-width="1.200"/>
<rect x="997.200" y="264" width="6.900" height="23.800" fill="#6699cc"/><path d="M1004.600 264v23.800" stroke="#111" stroke-width="1.200"/>
<rect x="1007" y="267.500" width="4.300" height="14.300" fill="#ffcc66"/><path d="M1011.700 267v15.200h-5.500" fill="none" stroke="#111" stroke-width="1.300"/><path d="M1007.500 276.500l3.500 3.500M1011 276.500l-3.500 3.500" stroke="#c8a040" stroke-width=".7"/>
<rect x="1012.300" y="271.700" width="11" height="6" fill="#ffcc66"/><path d="M1023.600 271v7.300h-11.300" fill="none" stroke="#111" stroke-width="1.300"/><path d="M1015 275v2.500M1018 275v2.500M1021 275v2.500" stroke="#a88030" stroke-width=".7"/>
<path d="M1016.300 279v13.500M1023.800 279v13.500" stroke="#000" stroke-width="1.100" stroke-dasharray="1.800 1.400"/>
<path d="M1017 293.400h6" stroke="#000" stroke-width="1.200"/><path d="M1016.300 293.400l3.200-2.300v4.600zM1023.800 293.400l-3.200-2.300v4.600z" fill="#000"/>
</g>
<!-- main picture -->
<g>
<rect x="722" y="382" width="59.500" height="102" fill="#ffcc66"/><rect x="790" y="382" width="40.500" height="102" fill="#ffcc66"/>
<path d="M721.700 484v-102.500h60M790 381.500h40.500" fill="none" stroke="#fff" stroke-width="1.200"/>
<path d="M722 484.400h59.500M789.700 484.400h41.500M830.700 381.500v103" stroke="#111" stroke-width="1.300" fill="none"/>
<rect x="718" y="369" width="127.500" height="6" fill="#6699cc"/><path d="M718 375.700h64.500M790 375.700h55.800v-6.700" stroke="#111" stroke-width="1.400" fill="none"/>
<rect x="783" y="375" width="6" height="114" fill="#6699cc"/><path d="M782.300 376v108" stroke="#fff" stroke-width="1.200"/><path d="M789.700 375v109.500" stroke="#111" stroke-width="1.300"/>
<rect x="718" y="489" width="130" height="4.700" fill="#6699cc"/><path d="M718 494.200h130.300v-5" stroke="#111" stroke-width="1.300" fill="none"/>
<g transform="translate(741.5,402.3)"><path d="M-3.200 -7.200h6.400l4 4v6.400l-4 4h-6.400l-4-4v-6.400z" fill="#ffcc66" stroke="#fff" stroke-width="1.300"/><path d="M7.200 -3.200v6.400l-4 4h-6.400l-2-2" fill="none" stroke="#333" stroke-width="1.600"/><circle r="3.600" fill="#ffcc66" stroke="#fff" stroke-width="1.400"/><path d="M2.600 -2.500a3.600 3.600 0 0 1 -4.500 5.700" fill="none" stroke="#444" stroke-width="1.200"/></g><g transform="translate(741.5,434.8)"><path d="M-3.200 -7.200h6.400l4 4v6.400l-4 4h-6.400l-4-4v-6.400z" fill="#ffcc66" stroke="#fff" stroke-width="1.300"/><path d="M7.200 -3.200v6.400l-4 4h-6.400l-2-2" fill="none" stroke="#333" stroke-width="1.600"/><circle r="3.600" fill="#ffcc66" stroke="#fff" stroke-width="1.400"/><path d="M2.600 -2.500a3.600 3.600 0 0 1 -4.500 5.700" fill="none" stroke="#444" stroke-width="1.200"/></g><g transform="translate(741,462.2)"><path d="M-3.200 -7.200h6.400l4 4v6.400l-4 4h-6.400l-4-4v-6.400z" fill="#ffcc66" stroke="#fff" stroke-width="1.300"/><path d="M7.200 -3.200v6.400l-4 4h-6.400l-2-2" fill="none" stroke="#333" stroke-width="1.600"/><circle r="3.600" fill="#ffcc66" stroke="#fff" stroke-width="1.400"/><path d="M2.600 -2.500a3.600 3.600 0 0 1 -4.500 5.700" fill="none" stroke="#444" stroke-width="1.200"/></g>
<g transform="translate(810.7,402.3)"><path d="M-3.200 -7.200h6.400l4 4v6.400l-4 4h-6.400l-4-4v-6.400z" fill="#ffcc66" stroke="#fff" stroke-width="1.300"/><path d="M7.200 -3.200v6.400l-4 4h-6.400l-2-2" fill="none" stroke="#333" stroke-width="1.600"/><circle r="3.600" fill="#ffcc66" stroke="#fff" stroke-width="1.400"/><path d="M2.600 -2.500a3.600 3.600 0 0 1 -4.500 5.700" fill="none" stroke="#444" stroke-width="1.200"/></g><g transform="translate(810.7,434.8)"><path d="M-3.200 -7.200h6.400l4 4v6.400l-4 4h-6.400l-4-4v-6.400z" fill="#ffcc66" stroke="#fff" stroke-width="1.300"/><path d="M7.200 -3.200v6.400l-4 4h-6.400l-2-2" fill="none" stroke="#333" stroke-width="1.600"/><circle r="3.600" fill="#ffcc66" stroke="#fff" stroke-width="1.400"/><path d="M2.600 -2.500a3.600 3.600 0 0 1 -4.500 5.700" fill="none" stroke="#444" stroke-width="1.200"/></g><g transform="translate(810.7,462.2)"><path d="M-3.200 -7.200h6.400l4 4v6.400l-4 4h-6.400l-4-4v-6.400z" fill="#ffcc66" stroke="#fff" stroke-width="1.300"/><path d="M7.200 -3.200v6.400l-4 4h-6.400l-2-2" fill="none" stroke="#333" stroke-width="1.600"/><circle r="3.600" fill="#ffcc66" stroke="#fff" stroke-width="1.400"/><path d="M2.600 -2.500a3.600 3.600 0 0 1 -4.500 5.700" fill="none" stroke="#444" stroke-width="1.200"/></g>
<!-- green drop -->
<path d="M785.700 418c2.500 5.500 10 14 10 22.500a10 10.300 0 0 1 -20 0c0-8.500 7.500-17 10-22.500z" fill="none" stroke="#0cc00c" stroke-width="3"/><path d="M785.700 418l-5 10" stroke="#111" stroke-width="1"/>
<path d="M785.700 425.500v17" stroke="#0cc00c" stroke-width="3.200"/><path d="M785.700 421l2.500 6h-5z" fill="#0cc00c"/>
<!-- dims -->
<g stroke="#000" stroke-width="1.500" fill="none">
<path d="M710.500 369.500v31.500M849.500 383v100M722 501.600h108M775.400 501.600v29.500M770 362.500h6M776.500 362.500h15.500"/>
<path d="M721.500 496v11M740.300 496v11M810.300 496v11M830.300 496v11" stroke-width="1.200"/>
</g>
<g stroke="#000" stroke-width="1.200" fill="none" stroke-dasharray="3.500 2.200">
<path d="M706 368.300h11M706 402.300h28M776.500 363v56M785.600 360v9M818.500 402.300h36M818.500 462.200h36M831 381.500h23M831 484.300h23M740.300 470v26M810.300 470v26M830.300 485v11M721.500 485v11"/>
</g>
<g fill="#000">
<path d="M710.500 368.300l3.3 5.5h-6.6zM710.500 402.300l3.3-5.5h-6.6z"/>
<path d="M849.500 381.500l3.3 5.5h-6.6zM849.500 402.300l3.3-5.5h-6.6zM849.500 402.300l3.3 5.5h-6.6zM849.500 462.200l3.3-5.5h-6.6zM849.500 462.200l3.3 5.5h-6.6zM849.500 484.300l3.3-5.5h-6.6z"/>
<path d="M721.500 501.600l5.5-3.3v6.6zM740.300 501.600l-5.5-3.3v6.6zM740.300 501.600l5.5-3.3v6.6zM810.300 501.600l-5.5-3.3v6.6zM810.300 501.600l5.5-3.3v6.6zM830.300 501.600l-5.5-3.3v6.6z"/>
<path d="M776.500 362.500l-5.5-3.3v6.6zM785.600 362.500l5.5-3.3v6.6z"/>
</g>
</g>
</svg>

<div id="bottom"></div>

</div>
</div>
</body></html>
